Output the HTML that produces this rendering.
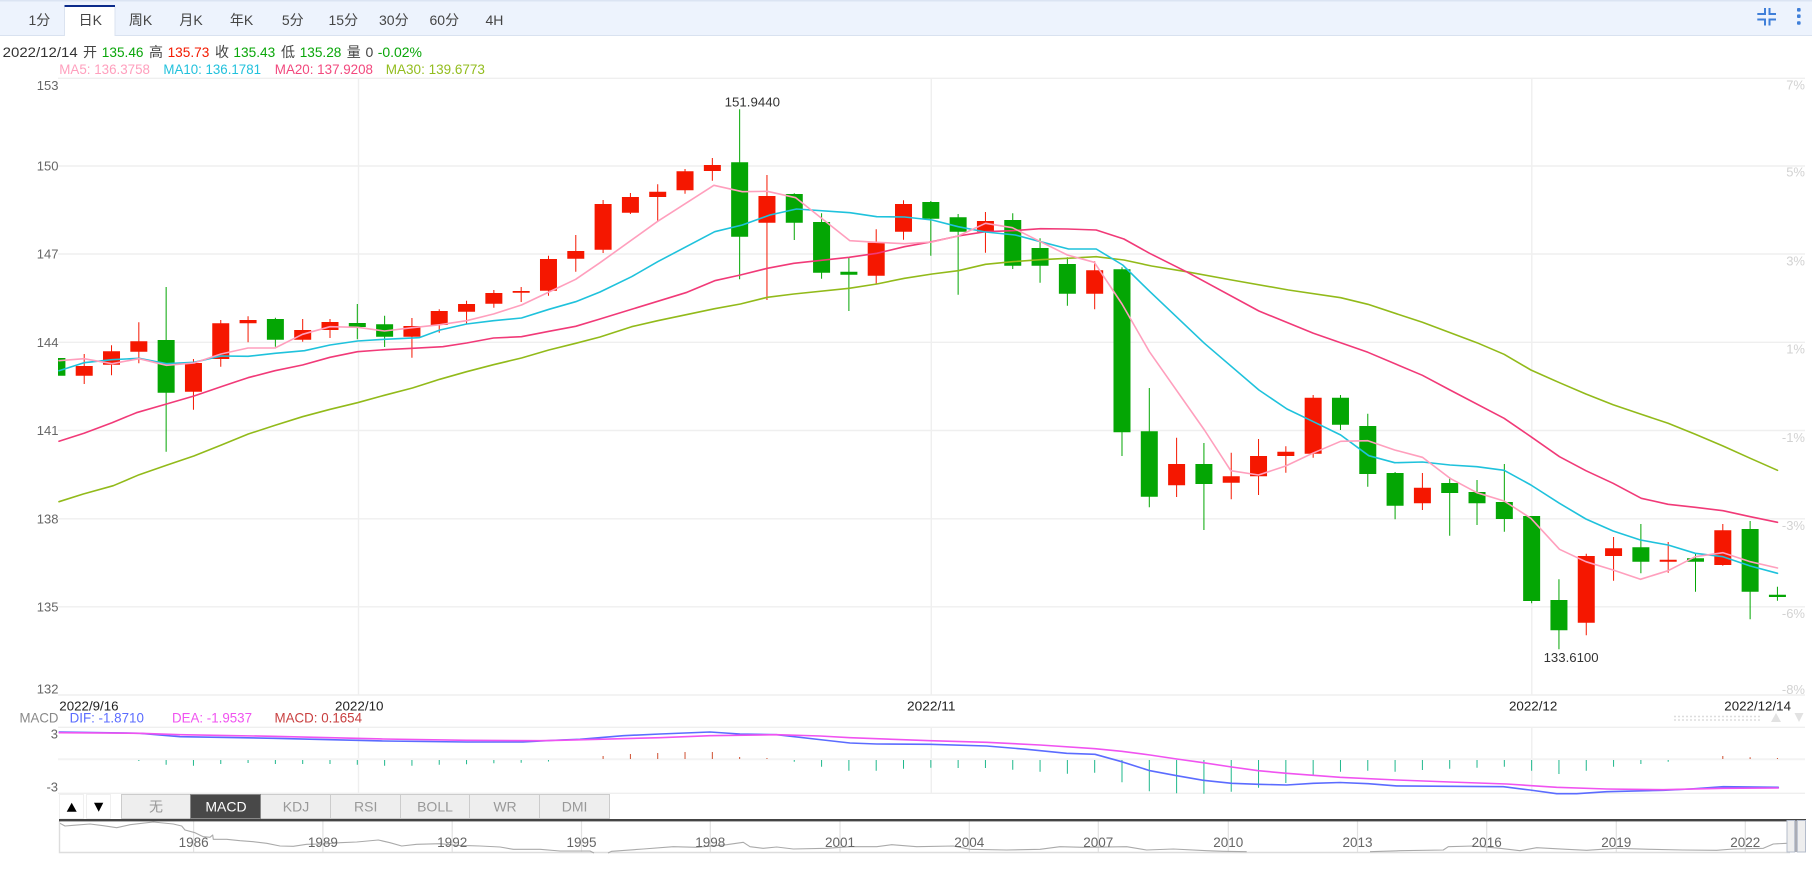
<!DOCTYPE html>
<html lang="zh">
<head>
<meta charset="utf-8">
<title>K线图</title>
<style>
html,body{margin:0;padding:0;background:#fff;width:1812px;height:876px;overflow:hidden}
svg{display:block;position:absolute;left:0;top:0}
text{font-family:"Liberation Sans","Noto Sans CJK SC",sans-serif}
.tab{font-size:14px;fill:#444;text-anchor:middle}
.inf{font-size:14px}
.ma{font-size:13.5px}
.axl{font-size:13px;fill:#666;text-anchor:end}
.axr{font-size:13px;fill:#d2d2d2;text-anchor:end}
.dt{font-size:13px;fill:#222}
.btn{font-size:14px;fill:#999;text-anchor:middle}
.yr{font-size:13.5px;fill:#666;text-anchor:middle}
.ln{fill:none;stroke-width:1.6;stroke-linejoin:round;stroke-linecap:round}
</style>
</head>
<body>
<svg width="1812" height="876" viewBox="0 0 1812 876" xmlns="http://www.w3.org/2000/svg">
<defs><clipPath id="c"><rect x="58" y="70" width="1750" height="630"/></clipPath></defs>

<!-- top bar -->
<rect x="0" y="0" width="1812" height="36" fill="#edf3fd"/>
<rect x="0" y="0" width="1812" height="1.5" fill="#dbe4f3"/>
<rect x="0" y="35" width="1812" height="1" fill="#d9e2f0"/>
<rect x="64.5" y="5" width="50.5" height="31" fill="#fff"/>
<path d="M64.5,7V36M115,7V36" stroke="#dbe3f0" stroke-width="1" fill="none"/>
<rect x="64.5" y="5" width="50.5" height="2" fill="#0b2b8a"/>
<text class="tab" x="39.4" y="25">1分</text>
<text class="tab" x="90.3" y="25">日K</text>
<text class="tab" x="140.5" y="25">周K</text>
<text class="tab" x="191" y="25">月K</text>
<text class="tab" x="241.5" y="25">年K</text>
<text class="tab" x="292.8" y="25">5分</text>
<text class="tab" x="343.3" y="25">15分</text>
<text class="tab" x="393.8" y="25">30分</text>
<text class="tab" x="444.3" y="25">60分</text>
<text class="tab" x="494.4" y="25">4H</text>
<path d="M1757.3,14H1765V8M1769.5,8V14H1776M1757.3,19.5H1765V25.5M1769.5,25.5V19.5H1776" fill="none" stroke="#3f7fd9" stroke-width="2"/>
<rect x="1797" y="8" width="3.6" height="3.6" rx="1" fill="#3f7fd9"/>
<rect x="1797" y="14.4" width="3.6" height="3.6" rx="1" fill="#3f7fd9"/>
<rect x="1797" y="21.2" width="3.6" height="3.6" rx="1" fill="#3f7fd9"/>

<!-- info row -->
<g class="inf">
<text x="2.7" y="57" fill="#333" class="inf" textLength="75" lengthAdjust="spacingAndGlyphs">2022/12/14</text>
<text x="83" y="57" fill="#444" class="inf">开</text>
<text x="101.8" y="57" fill="#0aa60a" class="inf" textLength="41.7" lengthAdjust="spacingAndGlyphs">135.46</text>
<text x="149" y="57" fill="#444" class="inf">高</text>
<text x="167.6" y="57" fill="#f31a00" class="inf" textLength="41.7" lengthAdjust="spacingAndGlyphs">135.73</text>
<text x="215" y="57" fill="#444" class="inf">收</text>
<text x="233.4" y="57" fill="#0aa60a" class="inf" textLength="41.8" lengthAdjust="spacingAndGlyphs">135.43</text>
<text x="281" y="57" fill="#444" class="inf">低</text>
<text x="299.7" y="57" fill="#0aa60a" class="inf" textLength="41.7" lengthAdjust="spacingAndGlyphs">135.28</text>
<text x="346.7" y="57" fill="#444" class="inf">量</text>
<text x="365.5" y="57" fill="#444" class="inf">0</text>
<text x="377.7" y="57" fill="#0aa60a" class="inf" textLength="44.3" lengthAdjust="spacingAndGlyphs">-0.02%</text>
<text x="59.3" y="74" fill="#ff9fbd" class="ma" textLength="90.7" lengthAdjust="spacingAndGlyphs">MA5: 136.3758</text>
<text x="163.4" y="74" fill="#22c1dc" class="ma" textLength="97.6" lengthAdjust="spacingAndGlyphs">MA10: 136.1781</text>
<text x="274.8" y="74" fill="#f2497e" class="ma" textLength="98.2" lengthAdjust="spacingAndGlyphs">MA20: 137.9208</text>
<text x="385.8" y="74" fill="#93bd1f" class="ma" textLength="99.1" lengthAdjust="spacingAndGlyphs">MA30: 139.6773</text>
</g>

<!-- grid -->
<g stroke="#efefef" stroke-width="1.4" fill="none">
<path d="M58,78.3H1805M58,166H1805M58,254H1805M58,342.3H1805M58,430.5H1805M58,518.8H1805M58,606.8H1805M58,695H1805"/>
<path d="M358.5,78V695M931.3,78V695M1531.8,78V695"/>
<path d="M58,727.3H1805M58,793.3H1805"/>
<path d="M358.5,727V793M931.3,727V793M1531.8,727V793"/>
</g>
<path d="M58,759.2H1805" stroke="#f3f3f3" stroke-width="2" fill="none"/>

<!-- axes -->
<text class="axl" x="58.5" y="90">153</text>
<text class="axl" x="58.5" y="170.5">150</text>
<text class="axl" x="58.5" y="258.5">147</text>
<text class="axl" x="58.5" y="347">144</text>
<text class="axl" x="58.5" y="435">141</text>
<text class="axl" x="58.5" y="523.3">138</text>
<text class="axl" x="58.5" y="611.3">135</text>
<text class="axl" x="58.5" y="693.7">132</text>
<text class="axr" x="1805" y="89.7">7%</text>
<text class="axr" x="1805" y="176.7">5%</text>
<text class="axr" x="1805" y="265.4">3%</text>
<text class="axr" x="1805" y="353.4">1%</text>
<text class="axr" x="1805" y="442">-1%</text>
<text class="axr" x="1805" y="530">-3%</text>
<text class="axr" x="1805" y="618">-6%</text>
<text class="axr" x="1805" y="694">-8%</text>

<!-- candles -->
<g clip-path="url(#c)" fill="none">
<path stroke="#f51700" stroke-width="1" d="M84.21,354V384M111.52,345.3V375.3M138.83,322.3V363.3M193.45,359V409.7M220.76,320V366.7M248.07,316.3V342.3M302.69,319V341.7M330,319V338M411.93,318V357.7M439.24,309.3V332.7M466.55,300.7V324M493.86,290V307.7M521.17,287V302M548.48,255.7V295.7M575.79,235V271.7M603.1,200V253M630.41,193V214M657.72,184.3V221M685.03,169V193.7M712.34,158V180.7M766.96,175V300M876.2,229.3V284M903.51,200.3V239.7M985.44,212V252.7M1094.68,261.3V309.3M1176.61,437.7V497M1231.23,452.7V499.3M1258.54,439V495M1285.85,446.3V472.7M1313.16,395V457.7M1422.4,473V510M1586.26,553.7V635.3M1613.57,537V580.7M1668.19,542V572.7M1722.81,524V565.7"/>
<path stroke="#f51700" stroke-width="17" d="M84.21,366V375.7M111.52,351.3V364.7M138.83,341.3V351.7M193.45,363V391.7M220.76,323.3V359M248.07,320V323.3M302.69,330V339.7M330,322V330M411.93,326V336.7M439.24,311V325M466.55,304V311.7M493.86,293V303.7M521.17,291V292.7M548.48,259V290.7M575.79,251V258.7M603.1,204V249.7M630.41,197V212.7M657.72,191.7V197M685.03,171.3V190.3M712.34,165V171M766.96,196V222.7M876.2,242.7V275.7M903.51,204V231.7M985.44,221V231.7M1094.68,270.3V293.7M1176.61,464V485.3M1231.23,476.3V482.7M1258.54,456V476.3M1285.85,451.7V456M1313.16,397.7V453.7M1422.4,487.7V503.3M1586.26,556V622.7M1613.57,548.3V556M1668.19,559.7V561.7M1722.81,530.3V565"/>
<path stroke="#04a604" stroke-width="1" d="M166.14,287V451.7M275.38,317.7V346.7M357.31,304V339.3M384.62,315.7V347M739.65,109.3V279.3M794.27,193.3V240M821.58,213.3V278.7M848.89,257.3V311M930.82,201V255.7M958.13,214V294.7M1012.75,213.3V269M1040.06,238.3V282.7M1067.37,257.3V305.7M1121.99,267.3V456M1149.3,388V507.3M1203.92,443V530M1340.47,395V430M1367.78,413.7V486.7M1395.09,472V519.3M1449.71,477.3V535.7M1477.02,480V525M1504.33,464V531.7M1531.64,516V603.3M1558.95,579.3V649.3M1640.88,524V573.3M1695.5,553V591.7M1750.12,521V619.3M1777.43,586.7V600.7"/>
<path stroke="#04a604" stroke-width="17" d="M56.9,358V375.7M166.14,340V392.7M275.38,319V339.7M357.31,323V327M384.62,324.3V336.7M739.65,162.3V236.7M794.27,194V222.7M821.58,222V272.7M848.89,271.7V274.7M930.82,202V218.7M958.13,217.3V231.7M1012.75,220V265.7M1040.06,248V265.7M1067.37,264V293.7M1121.99,269.3V432.3M1149.3,431.3V496.7M1203.92,464V484M1340.47,397.7V424.7M1367.78,426V474M1395.09,473V505.7M1449.71,483V493M1477.02,492V503.3M1504.33,502V519M1531.64,516V601M1558.95,600V630.3M1640.88,547.3V561.7M1695.5,558.3V561.7M1750.12,529V591.7M1777.43,594.7V597"/>

<!-- MA30 -->
<path class="ln" stroke="#92ba1a" d="M59,501.7L83.3,494L113.3,485.7L139.2,474.7L166.5,465.3L193.8,456L221.4,445L248.3,434L275.2,425.3L302.5,416.7L330.2,409.3L357.5,402.7L384.3,395.3L412.4,388L439.7,379.3L466.6,371.7L493.5,364.7L521.5,358L548.8,350L575.7,343.3L600,337L631.6,326.7L657.7,320.7L714.7,308.7L740.4,304L767.3,297.3L793.8,294L849.1,288.3L876.8,284L904.5,278.3L932.1,274L958.2,270.7L985.5,264.3L1012.4,261.7L1040.5,259.7L1067.4,258.3L1096.2,256.7L1123.9,260L1151.6,266L1186.3,271.7L1231.7,280L1288.5,290L1340.7,297.7L1367.9,304.3L1422.4,322.3L1476.9,342.7L1504.1,354.3L1530.9,370L1559.5,382.7L1585.9,394L1613.1,404.7L1640.4,414L1668.1,423.3L1695.3,434.3L1723,446L1750.3,458.3L1777.5,470.3"/>
<!-- MA20 -->
<path class="ln" stroke="#f13a78" d="M59,441.3L84,433.3L112,422.7L136.4,412.7L166.5,404L194,396L221,386.7L248,377.7L275,370.7L302.5,365L330,357.3L357.5,351.7L384.5,349.7L412.5,348.3L442.8,346.7L466.6,343L493.5,338L521.5,336.7L549,331.3L575.7,326.3L600,319L687,292.3L714.7,280.7L740.4,275L767.3,268.3L793.8,263.3L849.1,257.3L876.8,253.3L904.5,246.7L932.1,241.7L958.2,236L985.5,231.7L1012.4,230.7L1040.5,228.7L1067.4,229L1096.2,230L1123.9,239L1149.6,253.3L1186.3,271.7L1258.9,311L1313.4,333.3L1367.9,352.3L1422.4,375.3L1450,390L1504.1,418.3L1530.9,436.7L1559.5,456.7L1585.9,470.7L1613.1,483.3L1641.3,498.3L1668.1,504.3L1695.3,507.3L1723,510.7L1750.3,516.7L1777.5,522.3"/>
<!-- MA10 -->
<path class="ln" stroke="#1fc2dc" d="M59,370.7L84,362.7L112,359.7L139,358.3L166.5,363.7L194,362.3L221,356L248,356.3L275,353.3L304.5,350.7L330,345L357.5,341L384.5,339.3L419,337.7L440,330L466.6,324L493.5,320.7L521.5,318L549,309.3L575.7,301.7L600,292L631.6,276.7L657.7,261.7L714.7,231.7L742.3,225L770,215L796.5,209L850,212.7L876.8,216.7L904.5,217L932.1,220L958.2,226.7L985.5,232L1015.2,235L1040.5,241.7L1068.6,249L1096.2,249L1122.7,265L1150,291.7L1204.4,343.3L1258.9,390L1287,409L1313.4,421.7L1340.7,435L1368.8,455.7L1394.7,462.7L1422.4,462L1450,465L1476.9,466.7L1504.1,470.3L1530.9,485L1559.5,503.3L1585.9,519L1613.1,531L1640.4,540L1668.1,545L1695.3,553.3L1723,556.7L1750.3,566L1777.5,573.3"/>
<!-- MA5 -->
<path class="ln" stroke="#ff9fbd" d="M59,360.7L84,358.7L112,363.7L139,358.7L166.5,365.3L194,363L221,354L248,348L275,348L302.5,334.3L330,326.7L357.5,327.3L384.5,331L412.5,327.7L440,324.7L466.6,320.7L493.5,314L521.5,305L549,292L575.7,279.3L600,262.7L657.7,221.3L713.9,185.3L742.3,191.7L767.3,191.3L795.7,197.7L849.9,240.7L876.8,242.3L904.5,243.7L932.1,242L958.2,236L985.5,223.3L1012.4,227.7L1040.5,241.7L1067.4,255L1094.3,262.3L1122,304L1149.4,351.7L1204.4,430L1230.8,470.7L1258.5,475L1285.7,466L1312.5,453.3L1340.7,441.3L1367.9,440.7L1394.7,450L1422.4,457.3L1450,478.3L1476.9,492.7L1504.1,501L1530.9,518.3L1559.5,549.3L1585.9,561.7L1613.1,570L1640.4,579.3L1668.1,570.7L1695.3,556.7L1723,552.7L1750.3,561.7L1777.5,568"/>
</g>

<text x="724.6" y="106.5" font-size="13" fill="#333" textLength="55.4" lengthAdjust="spacingAndGlyphs">151.9440</text>
<text x="1543.6" y="662" font-size="13" fill="#333" textLength="55" lengthAdjust="spacingAndGlyphs">133.6100</text>

<!-- date labels -->
<text class="dt" x="59.3" y="710.5" textLength="59.3" lengthAdjust="spacingAndGlyphs">2022/9/16</text>
<text class="dt" x="335" y="710.5" textLength="48.5" lengthAdjust="spacingAndGlyphs">2022/10</text>
<text class="dt" x="907" y="710.5" textLength="48.5" lengthAdjust="spacingAndGlyphs">2022/11</text>
<text class="dt" x="1509" y="710.5" textLength="48.3" lengthAdjust="spacingAndGlyphs">2022/12</text>
<text class="dt" x="1724.3" y="710.5" textLength="66.7" lengthAdjust="spacingAndGlyphs">2022/12/14</text>

<!-- MACD legend -->
<text x="19.5" y="722.3" font-size="14" fill="#888" textLength="39" lengthAdjust="spacingAndGlyphs">MACD</text>
<text x="69.6" y="722.3" font-size="14" fill="#5b6cff" textLength="74.3" lengthAdjust="spacingAndGlyphs">DIF: -1.8710</text>
<text x="172" y="722.3" font-size="14" fill="#f053f0" textLength="80" lengthAdjust="spacingAndGlyphs">DEA: -1.9537</text>
<text x="274.5" y="722.3" font-size="14" fill="#c94040" textLength="87.5" lengthAdjust="spacingAndGlyphs">MACD: 0.1654</text>
<path d="M1674,716.5H1761M1674,720H1761" stroke="#ddd" stroke-width="1.5" stroke-dasharray="2 2" fill="none"/>
<polygon points="1776,713 1781,722 1771,722" fill="#e2e2e2"/>
<polygon points="1794.5,713 1803.5,713 1799,722" fill="#e2e2e2"/>
<text class="axl" x="58" y="738.7">3</text>
<text class="axl" x="58" y="791.3">-3</text>

<!-- MACD bars -->
<path stroke="#1fb88c" stroke-width="1" fill="none" d="M138.83,760V761M166.14,760V764.7M193.45,760V765.7M220.76,760V764M248.07,760V763M275.38,760V764M302.69,760V764M330,760V764M357.31,760V764.7M384.62,760V765.7M411.93,760V765.7M439.24,760V764.7M466.55,760V764.3M493.86,760V763.3M521.17,760V762.7M548.48,760V761.5M794.27,760V761.7M821.58,760V766.7M848.89,760V770.7M876.2,760V770.7M903.51,760V768.7M930.82,760V767.7M958.13,760V768M985.44,760V768M1012.75,760V769.7M1040.06,760V771.7M1067.37,760V773.7M1094.68,760V772.7M1121.99,760V782.3M1149.3,760V791.3M1176.61,760V793.3M1203.92,760V793.7M1231.23,760V791.7M1258.54,760V787.7M1285.85,760V783M1313.16,760V775.3M1340.47,760V771.7M1367.78,760V770.7M1395.09,760V771.7M1422.4,760V770M1449.71,760V768.7M1477.02,760V767.7M1504.33,760V766.7M1531.64,760V770.7M1558.95,760V774M1586.26,760V770.7M1613.57,760V766.7M1640.88,760V764M1668.19,760V761.7"/>
<path stroke="#cf4f30" stroke-width="1" fill="none" d="M603.1,756V759M630.41,754V759M657.72,753V759M685.03,752V759M712.34,752V759M739.65,757V759M766.96,758V759M1722.81,756V759M1750.12,757.3V759M1777.43,758V759"/>

<!-- DEA / DIF -->
<path class="ln" stroke="#5b6cff" d="M59.3,732L140,733.3L180,736.7L273.3,738.3L383,741L466.7,742L523,742L560,740L580,739.3L623.3,735.7L660,734L710,732L740,734L776.7,734.7L823.3,740L850,743L876.7,744L930,744.3L986.7,746L1026.7,749.3L1066.7,753.3L1095,754.3L1121.7,761.7L1150,770.7L1176.7,775.7L1203.3,780.3L1231.7,783.3L1258.3,784.3L1286.7,785L1313.3,783.3L1340,782.5L1368.3,783.7L1396.7,785.9L1450,786.3L1503.3,786.7L1530,790L1556.7,793.7L1576.7,793.7L1606.7,791.7L1663.3,790.3L1690,789L1723.3,786.7L1778.3,787.3"/>
<path class="ln" stroke="#f053f0" d="M59.3,732.7L140,733.3L180,734.7L273,736.3L383,739L466.7,740.3L540,740.7L560,740.3L660,737.7L710,735.7L776.7,734.7L820,736L850,737.7L930,740.7L986.7,742.3L1040,745L1095,748.7L1121.7,751.3L1150,755L1176.7,759L1203.3,762.7L1231.7,767L1258.3,770.7L1286.7,773.3L1313.3,775.3L1340,777.3L1396.7,780L1450,782L1506.7,784L1556.7,787.3L1606.7,789L1663.3,789.7L1723.3,788.3L1778.3,788"/>

<!-- toolbar -->
<g fill="#fff" stroke="#f0f0f0" stroke-width="1">
<rect x="59.5" y="794.5" width="24" height="24"/>
<rect x="86.5" y="794.5" width="24" height="24"/>
</g>
<polygon points="71.7,802.7 76.7,811.7 66.7,811.7" fill="#000"/>
<polygon points="94,802.7 103.3,802.7 98.7,811.7" fill="#000"/>
<g fill="#eee" stroke="#ccc" stroke-width="1">
<rect x="121.5" y="794.5" width="69" height="24"/>
<rect x="260.5" y="794.5" width="70" height="24"/>
<rect x="330.5" y="794.5" width="70" height="24"/>
<rect x="400.5" y="794.5" width="69" height="24"/>
<rect x="469.5" y="794.5" width="70" height="24"/>
<rect x="539.5" y="794.5" width="70" height="24"/>
</g>
<rect x="190.5" y="794.5" width="70" height="24" fill="#484848" stroke="#888" stroke-width="1"/>
<text class="btn" x="156" y="811.5">无</text>
<text class="btn" x="226" y="811.5" style="fill:#fff">MACD</text>
<text class="btn" x="296" y="811.5">KDJ</text>
<text class="btn" x="365.7" y="811.5">RSI</text>
<text class="btn" x="435" y="811.5">BOLL</text>
<text class="btn" x="505" y="811.5">WR</text>
<text class="btn" x="574.6" y="811.5">DMI</text>

<!-- navigator -->
<path d="M193.6,821V852M322.9,821V852M452.2,821V852M581.5,821V852M710.3,821V852M840,821V852M969.3,821V852M1098.3,821V852M1228.3,821V852M1357.5,821V852M1486.7,821V852M1616.3,821V852M1745.3,821V852" stroke="#e2e2e2" stroke-width="1.2" fill="none"/>
<path d="M59.5,821V852.5H1790" stroke="#ddd" stroke-width="1.4" fill="none"/>
<path fill="none" stroke="#aaa" stroke-width="1.1" stroke-linejoin="round" d="M60,823.3L65,826L73.3,825.3L90,824L103.3,825.7L116.7,827.7L130,824.7L153.3,822L173.3,824L181.7,826L185,830L195,832.7L203.3,836.7L210,837.3L212.7,835L213.3,839.3L226.7,839.3L240,840.7L253.3,841.7L266.7,843.3L280,846L293.3,846.3L306.7,844.3L323.3,844L340,842.7L356.7,842L378.3,840L390,842.7L401.7,846L416.7,844.3L440,843.7L456.7,845.3L480,846L500,847L513.3,849.3L540,849.3L560,851L590,851L594,853M608,853L611.7,851.3L643.3,849L673.3,846.7L696.7,847.3L726.7,844.7L743.3,842.3L750,846.7L763.3,848.3L776.7,847L793.3,849L826.7,848.3L850,846.7L876.7,846.7L891.7,844.7L916.7,846.7L953.3,846L970,849.3L1006.7,850L1040,849.3L1060,846.7L1083.3,847.3L1126.7,846.7L1146.7,850L1173.3,849L1206.7,850.7L1223.3,851.3L1246.7,851.7M1370,851.7L1400,850.7L1443.3,850L1448.3,846.7L1473.3,846L1500,848.3L1520,850.7L1536.7,847.7L1566.7,849.3L1586.7,850.3L1616.7,848.3L1650,849.3L1683.3,850L1716.7,850.3L1733.3,849L1763.3,848.3L1773.3,844L1786.7,843.3"/>
<rect x="59" y="819" width="1747" height="2.4" fill="#444"/>
<text class="yr" x="193.6" y="847">1986</text>
<text class="yr" x="322.9" y="847">1989</text>
<text class="yr" x="452.2" y="847">1992</text>
<text class="yr" x="581.5" y="847">1995</text>
<text class="yr" x="710.3" y="847">1998</text>
<text class="yr" x="840" y="847">2001</text>
<text class="yr" x="969.3" y="847">2004</text>
<text class="yr" x="1098.3" y="847">2007</text>
<text class="yr" x="1228.3" y="847">2010</text>
<text class="yr" x="1357.5" y="847">2013</text>
<text class="yr" x="1486.7" y="847">2016</text>
<text class="yr" x="1616.3" y="847">2019</text>
<text class="yr" x="1745.3" y="847">2022</text>
<rect x="1794.7" y="820.5" width="2.6" height="31.5" fill="#a8a8ae"/>
<rect x="1787" y="820.5" width="7.7" height="31.5" fill="#eee" stroke="#b4bccb" stroke-width="1"/>
<rect x="1797.3" y="820.5" width="8.2" height="31.5" fill="#eee" stroke="#b4bccb" stroke-width="1"/>
</svg>
</body>
</html>
